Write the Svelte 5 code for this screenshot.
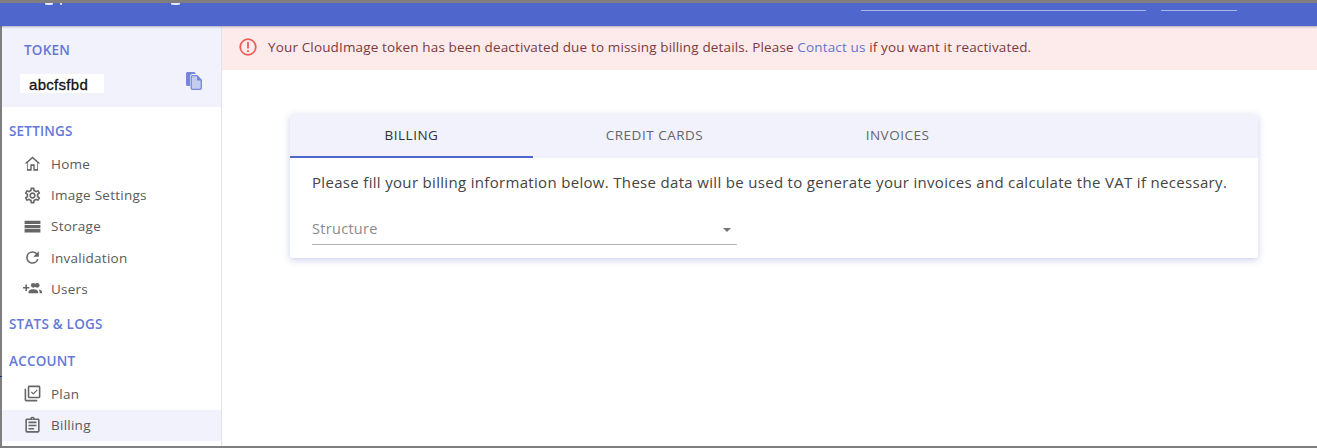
<script>
  const settings = [
    { label: 'Home', icon: 'home' },
    { label: 'Image Settings', icon: 'gear' },
    { label: 'Storage', icon: 'storage' },
    { label: 'Invalidation', icon: 'refresh' },
    { label: 'Users', icon: 'users' }
  ];
  const account = [
    { label: 'Plan', icon: 'plan' },
    { label: 'Billing', icon: 'billing', active: true }
  ];
  const tabs = ['Billing', 'Credit cards', 'Invoices'];
  let activeTab = 'Billing';
</script>

{#snippet navIcon(name)}
  <svg class="nav-icon" viewBox="0 0 24 24" fill="#666">
    {#if name === 'home'}
      <path d="M12 5.700l6 5.300v8h-3.200v-6H9.200v6H6v-8l6-5.300zM12 3L2 12h3v9h6v-6h2v6h6v-9h3L12 3z" />
    {:else if name === 'gear'}
      <path d="M19.430 12.980c.04-.32.07-.64.07-.98 0-.34-.03-.66-.07-.98l2.110-1.650c.19-.15.24-.42.12-.64l-2-3.460c-.09-.16-.26-.25-.44-.25-.06 0-.12.01-.17.03l-2.490 1c-.52-.4-1.080-.73-1.690-.98l-.38-2.650C14.460 2.180 14.250 2 14 2h-4c-.25 0-.46.18-.49.42l-.38 2.650c-.61.25-1.170.59-1.690.98l-2.490-1c-.06-.02-.12-.03-.18-.03-.17 0-.34.09-.43.25l-2 3.460c-.13.22-.07.49.12.64l2.110 1.650c-.04.32-.07.65-.07.98 0 .33.03.66.07.98l-2.110 1.650c-.19.15-.24.42-.12.64l2 3.460c.09.16.26.25.44.25.06 0 .12-.01.17-.03l2.490-1c.52.4 1.080.73 1.690.98l.38 2.650c.03.24.24.42.49.42h4c.25 0 .46-.18.49-.42l.38-2.650c.61-.25 1.170-.59 1.690-.98l2.490 1c.06.02.12.03.18.03.17 0 .34-.09.43-.25l2-3.460c.12-.22.07-.49-.12-.64l-2.110-1.650zm-1.980-1.710c.04.31.05.52.05.73 0 .21-.02.43-.05.73l-.14 1.130.89.7 1.080.84-.7 1.210-1.270-.51-1.040-.42-.9.68c-.43.32-.84.56-1.250.73l-1.060.43-.16 1.130-.2 1.350h-1.400l-.19-1.350-.16-1.130-1.060-.43c-.43-.18-.83-.41-1.230-.71l-.91-.7-1.060.43-1.270.51-.7-1.210 1.080-.84.89-.7-.14-1.130c-.03-.31-.05-.54-.05-.74s.02-.43.05-.73l.14-1.130-.89-.7-1.080-.84.7-1.210 1.270.51 1.040.42.9-.68c.43-.32.84-.56 1.250-.73l1.060-.43.16-1.130.2-1.350h1.390l.19 1.350.16 1.130 1.060.43c.43.18.83.41 1.230.71l.91.7 1.060-.43 1.270-.51.7 1.210-1.070.85-.89.7.14 1.130zM12 8c-2.210 0-4 1.790-4 4s1.790 4 4 4 4-1.790 4-4-1.790-4-4-4zm0 6c-1.100 0-2-.9-2-2s.9-2 2-2 2 .9 2 2-.9 2-2 2z" />
    {:else if name === 'storage'}
      <path d="M2 19.500h20v-4.200H2v4.200zM2 10v4.200h20V10H2zM2 4.700v4.200h20V4.700H2z" />
    {:else if name === 'refresh'}
      <path d="M17.650 6.350A7.960 7.960 0 0 0 12 4a8 8 0 1 0 7.740 10h-2.080A6 6 0 1 1 12 6c1.660 0 3.140.69 4.220 1.780L13 11h7V4l-2.350 2.350z" />
    {:else if name === 'users'}
      <path d="M8 10H5V7H3v3H0v2h3v3h2v-3h3v-2zm10 1a3 3 0 1 0-.01-6.010A3 3 0 0 0 18 11zm-5 0a3 3 0 1 0-.01-6.010A3 3 0 0 0 13 11zm0 2c-2 0-6 1-6 3v2h12v-2c0-2-4-3-6-3zm6.620.160c.83.730 1.380 1.660 1.380 2.840v2h3v-2c0-1.540-2.370-2.490-4.380-2.840z" />
    {:else if name === 'plan'}
      <path d="M4 6H2v14c0 1.100.9 2 2 2h14v-2H4V6zm16-4H8c-1.100 0-2 .9-2 2v12c0 1.100.9 2 2 2h12c1.100 0 2-.9 2-2V4c0-1.100-.9-2-2-2zm0 14H8V4h12v12z" />
      <path d="M10.500 10l2.500 2.500 5-5" fill="none" stroke="#666" stroke-width="1.500" />
    {:else}
      <path d="M7 15h7v2H7zm0-4h10v2H7zm0-4h10v2H7zm12-4h-4.180C14.400 1.840 13.300 1 12 1c-1.300 0-2.400.84-2.820 2H5c-.14 0-.27.01-.4.04-.39.08-.74.28-1.010.55-.18.18-.33.4-.43.64-.1.23-.16.49-.16.77v14c0 .27.06.54.16.78s.25.45.43.64c.27.27.62.47 1.010.55.13.02.26.03.4.03h14c1.100 0 2-.9 2-2V5c0-1.100-.9-2-2-2zm-7-.25c.41 0 .75.34.75.75s-.34.75-.75.75-.75-.34-.75-.75.34-.75.75-.75zM19 19H5V5h14v14z" />
    {/if}
  </svg>
{/snippet}

{#snippet navItem(item)}
  <a class="nav-item" class:active={item.active} href="#top">
    {@render navIcon(item.icon)}
    <span>{item.label}</span>
  </a>
{/snippet}

<div class="page">
  <i class="tick tick-corner"></i>
  <i class="tick tick-top"></i>
  <i class="tick tick-left"></i>

  <header class="topbar">
    <i class="blob blob-a"></i>
    <i class="blob blob-b"></i>
    <i class="blob blob-c"></i>
    <div class="field-lines">
      <span class="line wide"></span>
      <span class="line narrow"></span>
    </div>
  </header>

  <div class="body">
    <aside class="sidebar">
      <section class="token">
        <h2>TOKEN</h2>
        <div class="token-row">
          <span class="token-value">abcfsfbd</span>
          <svg class="copy" viewBox="0 0 18 18" aria-hidden="true">
            <path fill="#7686dc" d="M1 1.500C1 .7 1.700 0 2.500 0h7L11 2H7.500C6 2 5 3 5 4.500V14H2.500C1.700 14 1 13.300 1 12.500z" />
            <path fill="#c3cbef" stroke="#7686dc" stroke-width="1.300" d="M7.500 3.700H12l4.300 4.300v8c0 .7-.5 1.300-1.300 1.300H7.500c-.7 0-1.300-.6-1.300-1.300V5c0-.7.6-1.300 1.300-1.300z" />
            <path fill="#7686dc" d="M12 3.700v4.800h4.500z" />
          </svg>
        </div>
      </section>

      <h3 class="group first">SETTINGS</h3>
      <nav>
        {#each settings as item}
          {@render navItem(item)}
        {/each}
      </nav>

      <h3 class="group stats">STATS &amp; LOGS</h3>
      <h3 class="group account">ACCOUNT</h3>
      <nav>
        {#each account as item}
          {@render navItem(item)}
        {/each}
      </nav>
    </aside>

    <main class="content">
      <div class="alert">
        <svg class="alert-icon" viewBox="0 0 20 20" aria-hidden="true">
          <circle cx="10" cy="10" r="7.800" fill="none" stroke="#ee5b54" stroke-width="1.700" />
          <path fill="#ee5b54" d="M9.100 5h1.800v6.500H9.100zM9.100 13.200h1.800V15H9.100z" />
        </svg>
        <p>Your CloudImage token has been deactivated due to missing billing details. Please <a href="#top">Contact us</a> if you want it reactivated.</p>
      </div>

      <div class="card">
        <div class="tabs">
          {#each tabs as tab}
            <button class="tab" class:selected={tab === activeTab} onclick={() => (activeTab = tab)}>{tab}</button>
          {/each}
        </div>
        <div class="card-body">
          <p class="intro">Please fill your billing information below. These data will be used to generate your invoices and calculate the VAT if necessary.</p>
          <div class="select">
            <span>Structure</span>
            <i class="caret"></i>
          </div>
        </div>
      </div>
    </main>
  </div>
</div>

<style>
  :global(body) {
    margin: 0;
    background: #fff;
  }

  .page {
    position: relative;
    height: 448px;
    box-sizing: border-box;
    display: flex;
    flex-direction: column;
    overflow: hidden;
    border-top: 3px solid #7f7f7f;
    border-bottom: 2px solid #7f7f7f;
    font-family: "Open Sans", "Noto Sans", sans-serif;
    color: #555;
  }

  /* screenshot leftovers along the window edge */
  .tick {
    position: absolute;
    background: #1c2a8c;
  }

  .tick-corner {
    left: 0;
    top: -3px;
    width: 2px;
    height: 3px;
  }

  .tick-top {
    left: 662px;
    top: -3px;
    width: 3px;
    height: 3px;
  }

  .tick-left {
    left: 0;
    top: 373px;
    width: 2px;
    height: 1px;
    z-index: 2;
  }

  .topbar {
    height: 23px;
    flex: none;
    background: #4f66cd;
    box-shadow: 0 1px 2px rgba(40, 50, 110, 0.35);
    position: relative;
    z-index: 1;
  }

  .blob {
    position: absolute;
    top: 0;
    height: 2px;
    background: #e4e8fa;
    border-radius: 0 0 50% 50%;
  }

  .blob-a {
    left: 45px;
    width: 8px;
  }

  .blob-b {
    left: 60px;
    width: 2px;
  }

  .blob-c {
    left: 171px;
    width: 9px;
  }

  .field-lines {
    display: flex;
    gap: 15px;
    padding: 7px 0 0 861px;
  }

  .line {
    height: 1px;
    background: #a9b5ec;
    display: block;
  }

  .wide {
    width: 285px;
  }

  .narrow {
    width: 76px;
  }

  .body {
    flex: 1;
    display: flex;
    min-height: 0;
  }

  .sidebar {
    width: 222px;
    flex: none;
    box-sizing: border-box;
    border-left: 2px solid #7f7f7f;
    border-right: 1px solid #e3e3e8;
  }

  .token {
    height: 81px;
    box-sizing: border-box;
    background: #f1f2fb;
    padding: 16px 0 0 22px;
  }

  .token h2 {
    margin: 0;
    font-size: 13.500px;
    line-height: 16px;
    font-weight: 600;
    color: #6478d8;
    letter-spacing: 0.2px;
  }

  .token-row {
    display: flex;
    align-items: flex-start;
    justify-content: space-between;
    margin-top: 16px;
    padding-right: 18px;
    margin-left: -4px;
  }

  .token-value {
    width: 84px;
    height: 19px;
    box-sizing: border-box;
    background: #fff;
    padding: 3px 0 0 9px;
    font-family: "Liberation Sans", Arial, sans-serif;
    font-size: 15px;
    line-height: 16px;
    color: #111;
    letter-spacing: 0.3px;
    -webkit-text-stroke: 0.3px #111;
  }

  .copy {
    width: 18px;
    height: 18px;
    margin-top: -2px;
  }

  .group {
    margin: 0;
    padding-left: 7px;
    font-size: 13.500px;
    line-height: 16px;
    font-weight: 600;
    color: #6478d8;
    letter-spacing: 0.2px;
  }

  .first {
    margin-top: 16px;
    margin-bottom: 9.250px;
  }

  .stats {
    margin-top: 11.750px;
  }

  .account {
    margin-top: 21px;
    margin-bottom: 9px;
  }

  .nav-item {
    height: 31.250px;
    display: flex;
    align-items: center;
    padding-left: 21px;
    gap: 9px;
    font-size: 13.500px;
    letter-spacing: 0.25px;
    color: #5a5a5a;
    text-decoration: none;
  }

  .nav-item.active {
    background: #f1f2fb;
  }

  .nav-icon {
    width: 19px;
    height: 19px;
    flex: none;
  }

  .content {
    flex: 1;
    min-width: 0;
  }

  .alert {
    height: 44px;
    box-sizing: border-box;
    display: flex;
    align-items: center;
    background: #fdeaea;
    padding: 0 0 2px 16px;
    gap: 10px;
    color: #7b3a3e;
  }

  .alert-icon {
    width: 20px;
    height: 20px;
    flex: none;
  }

  .alert p {
    margin: 0;
    font-size: 13.500px;
    white-space: nowrap;
    letter-spacing: 0.145px;
  }

  .alert a {
    color: #6474cf;
    text-decoration: none;
  }

  .card {
    width: 968px;
    margin: 44px 0 0 68px;
    border-radius: 3px;
    background: #fff;
    box-shadow: 0 2px 7px rgba(90, 105, 200, 0.32);
    overflow: hidden;
  }

  .tabs {
    display: flex;
    height: 44px;
    background: #f1f2fb;
  }

  .tab {
    width: 243px;
    height: 44px;
    border: 0;
    border-bottom: 2px solid transparent;
    background: none;
    padding: 2px 0 0;
    font: 500 13.500px/1 "Open Sans", "Noto Sans", sans-serif;
    letter-spacing: 0.5px;
    text-transform: uppercase;
    color: #666;
  }

  .tab.selected {
    color: #333;
    border-bottom-color: #4f66cd;
  }

  .card-body {
    padding: 14px 22px 13px;
  }

  .intro {
    margin: 0;
    font-size: 15px;
    line-height: 20px;
    color: #444;
    white-space: nowrap;
    letter-spacing: 0.32px;
  }

  .select {
    width: 425px;
    height: 36px;
    margin-top: 17px;
    box-sizing: border-box;
    display: flex;
    align-items: center;
    justify-content: space-between;
    padding: 3px 6px 0 0;
    border-bottom: 1px solid #b5b5b5;
    font-size: 14.500px;
    color: #8a8a8a;
    letter-spacing: 0.3px;
  }

  .caret {
    width: 0;
    height: 0;
    border-left: 4.500px solid transparent;
    border-right: 4.500px solid transparent;
    border-top: 4.500px solid #757575;
    margin-top: 3px;
  }
</style>
